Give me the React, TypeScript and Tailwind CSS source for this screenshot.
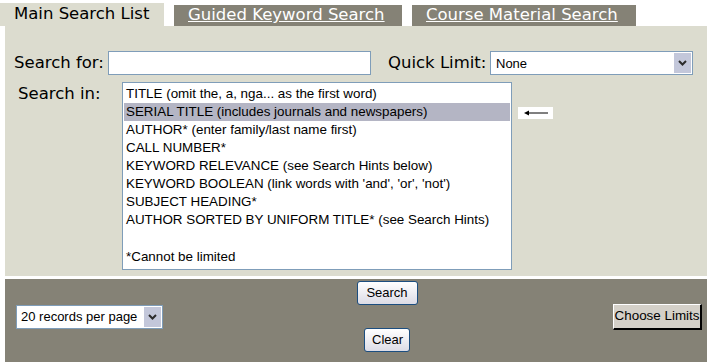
const items = [
  "TITLE (omit the, a, nga... as the first word)",
  "SERIAL TITLE (includes journals and newspapers)",
  "AUTHOR* (enter family/last name first)",
  "CALL NUMBER*",
  "KEYWORD RELEVANCE (see Search Hints below)",
  "KEYWORD BOOLEAN (link words with 'and', 'or', 'not')",
  "SUBJECT HEADING*",
  "AUTHOR SORTED BY UNIFORM TITLE* (see Search Hints)",
  "",
  "*Cannot be limited",
];

const Chevron = () => (
  <svg width="9" height="6" viewBox="0 0 9 6">
    <path d="M1 1 L4.5 4.5 L8 1" stroke="#2b2b2b" strokeWidth="2" fill="none" />
  </svg>
);

const DropButton = () => (
  <div className="flex h-full w-[19px] items-center justify-center border border-white bg-[#c3c7da]">
    <Chevron />
  </div>
);

const XpButton = ({ label, className }: { label: string; className?: string }) => (
  <button
    className={
      "h-[24px] rounded-[3px] border border-[#1c4e80] bg-gradient-to-b from-white to-[#dcdce6] px-[7px] font-['Liberation_Sans',sans-serif] text-[13px] text-black " +
      (className ?? "")
    }
  >
    {label}
  </button>
);

export default function App() {
  return (
    <div className="h-[362px] w-[714px] overflow-hidden bg-white font-['DejaVu_Sans',sans-serif]">
      {/* tabs */}
      <div className="flex h-[26px] items-end">
        <div className="flex h-[23px] w-[164px] items-center bg-[#dcdccf] pl-[14px] text-[16.5px] text-black">
          Main Search List
        </div>
        <div className="ml-[10px] flex h-[21px] w-[228px] items-center bg-[#858276] pl-[14px] text-[16.5px] text-white underline">
          Guided Keyword Search
        </div>
        <div className="ml-[10px] flex h-[21px] w-[224px] items-center bg-[#858276] pl-[14px] text-[16.5px] text-white underline">
          Course Material Search
        </div>
      </div>

      {/* main panel */}
      <div className="ml-[5px] h-[250px] w-[702px] bg-[#dcdccf]">
        <div className="flex items-center pt-[25px]">
          <span className="w-[103px] pl-[9px] text-[16.5px] text-black">Search for:</span>
          <input className="h-[24px] w-[263px] border border-[#7f9db9] bg-white outline-none" />
          <span className="w-[119px] pl-[17px] text-[16.5px] text-black">Quick Limit:</span>
          <div className="flex h-[24px] w-[203px] items-center border border-[#7f9db9] bg-white">
            <span className="flex-1 pl-[5px] font-['Liberation_Sans',sans-serif] text-[13px]">None</span>
            <DropButton />
          </div>
        </div>

        <div className="mt-[6px] flex">
          <span className="mt-[2px] w-[117px] pl-[13px] text-[16.5px] leading-[20px] text-black">Search in:</span>
          <div className="h-[188px] w-[390px] border border-[#7f9db9] bg-white px-[1px] pt-[2px]">
            {items.map((t, i) => (
              <div
                key={i}
                className={
                  "h-[18.1px] whitespace-nowrap pl-[2px] font-['Liberation_Sans',sans-serif] text-[13.4px] leading-[18px] text-black " +
                  (i === 1 ? "bg-[#b4b5c4]" : "")
                }
              >
                {t}
              </div>
            ))}
          </div>
          <div className="ml-[6px] mt-[25px] flex h-[12px] w-[35px] items-center justify-center bg-white">
            <svg width="24" height="6" viewBox="0 0 24 6">
              <path d="M0 3 L5 0.5 L5 5.5 Z" fill="black" />
              <path d="M4 3 H24" stroke="black" strokeWidth="1" />
            </svg>
          </div>
        </div>
      </div>

      {/* bottom bar */}
      <div className="ml-[5px] mt-[3px] flex h-[83px] w-[702px] bg-[#858276]">
        <div className="flex w-[347px] items-start pl-[11px] pt-[26px]">
          <div className="flex h-[24px] w-[147px] items-center border border-[#7f9db9] bg-white">
            <span className="flex-1 pl-[4px] font-['Liberation_Sans',sans-serif] text-[13px]">20 records per page</span>
            <DropButton />
          </div>
        </div>
        <div className="flex w-[70px] flex-col items-center pt-[2px]">
          <XpButton label="Search" className="w-[61px]" />
          <XpButton label="Clear" className="mt-[23px] w-[46px]" />
        </div>
        <div className="flex flex-1 items-start justify-end pr-[5px] pt-[25px]">
          <button className="h-[26px] w-[89px] border-t border-l border-t-white border-l-white border-r-2 border-b-2 border-r-black border-b-black bg-[#d4d0c8] font-['Liberation_Sans',sans-serif] text-[13.4px] text-black">
            Choose Limits
          </button>
        </div>
      </div>
    </div>
  );
}
